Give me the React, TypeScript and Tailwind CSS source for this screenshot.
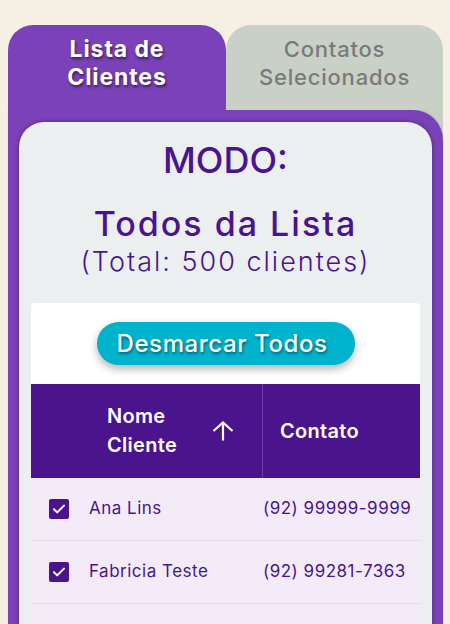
import React from "react";

const rows = [
  { name: "Ana Lins", phone: "(92) 99999-9999" },
  { name: "Fabricia Teste", phone: "(92) 99281-7363" },
];

function Check() {
  return (
    <div className="w-[20px] h-[20px] rounded-[2px] bg-[#4a148c] flex items-center justify-center">
      <svg width="14" height="14" viewBox="0 0 14 14" fill="none">
        <path d="M2 7.2l3.2 3.2L12 3.6" stroke="white" strokeWidth="2" strokeLinecap="round" strokeLinejoin="round" />
      </svg>
    </div>
  );
}

export default function App() {
  return (
    <div
      className="h-[624px] overflow-hidden bg-[#f6f0e4] pt-[25px] pl-[8px] pr-[7px]"
      style={{ fontFamily: "Inter, 'Noto Sans', sans-serif" }}
    >
      <div className="flex h-[85px]">
        <div className="w-[218px] bg-[#7b41b8] rounded-t-[25px] pt-[10px] text-center text-white font-bold text-[23px] leading-[28px] tracking-[0.9px] [text-shadow:1px_2px_3px_rgba(0,0,0,0.55)]">
          Lista de
          <br />
          Clientes
        </div>
        <div className="flex-1 bg-[#c9d1c6] rounded-t-[25px] pt-[10px] text-center text-[#7a7a7a] font-medium text-[22px] leading-[28px] tracking-[0.8px]">
          Contatos
          <br />
          Selecionados
        </div>
      </div>
      <div className="bg-[linear-gradient(to_left,#c9d1c6_50%,transparent_50%)]">
        <div className="bg-[#7b41b8] rounded-tr-[30px] px-[11px] pt-[12px] shadow-[0_-1px_2px_rgba(0,0,0,0.12)]">
          <div className="bg-[#ebeff0] rounded-t-[25px] px-[12px] pt-[16px] pb-[40px] shadow-[0_0_4px_rgba(0,0,0,0.4)] text-[#4a148c] text-center">
            <div className="text-[36px] leading-[44px] font-medium">MODO:</div>
            <div className="mt-[22px] text-[34px] leading-[40px] font-medium tracking-[2px]">Todos da Lista</div>
            <div className="mt-[2px] text-[27px] leading-[32px] font-light tracking-[2px]">(Total: 500 clientes)</div>
            <div className="mt-[25px] bg-white rounded-[4px] overflow-hidden text-left">
              <div className="h-[81px] flex items-center justify-center">
                <button className="w-[258px] h-[43px] rounded-full bg-[#00b3cc] pl-[20px] text-left text-white font-medium text-[24px] tracking-[0.6px] shadow-[0_4px_8px_rgba(0,0,0,0.3)] [text-shadow:1px_2px_3px_rgba(0,0,0,0.45)]">
                  Desmarcar Todos
                </button>
              </div>
              <div className="grid grid-cols-[231px_1fr] h-[94px] bg-[#4a148c] text-white font-semibold text-[20px] leading-[29px]">
                <div className="flex items-center pl-[76px]">
                  <div className="w-[105px] tracking-[0.3px]">
                    Nome
                    <br />
                    Cliente
                  </div>
                  <svg width="22" height="20" viewBox="0 0 22 20" fill="none">
                    <path d="M1.5 10L11 1.5L20.5 10M11 1.5V19.5" stroke="white" strokeWidth="2.2" strokeLinejoin="miter" />
                  </svg>
                </div>
                <div className="flex items-center pl-[17px] border-l border-[#6b3fa6] tracking-[0.3px]">Contato</div>
              </div>
              {rows.map((r) => (
                <div key={r.name} className="grid grid-cols-[231px_1fr] h-[63px] bg-[#f3ecf8] border-b border-[#e2dce8] text-[17px] text-[#4a148c]">
                  <div className="flex items-center pl-[18px]">
                    <Check />
                    <span className="ml-[20px] tracking-[0.5px]">{r.name}</span>
                  </div>
                  <div className="flex items-center pl-[1px] tracking-[0.5px]">{r.phone}</div>
                </div>
              ))}
              <div className="h-[63px] bg-[#f3ecf8]" />
            </div>
          </div>
        </div>
      </div>
    </div>
  );
}
